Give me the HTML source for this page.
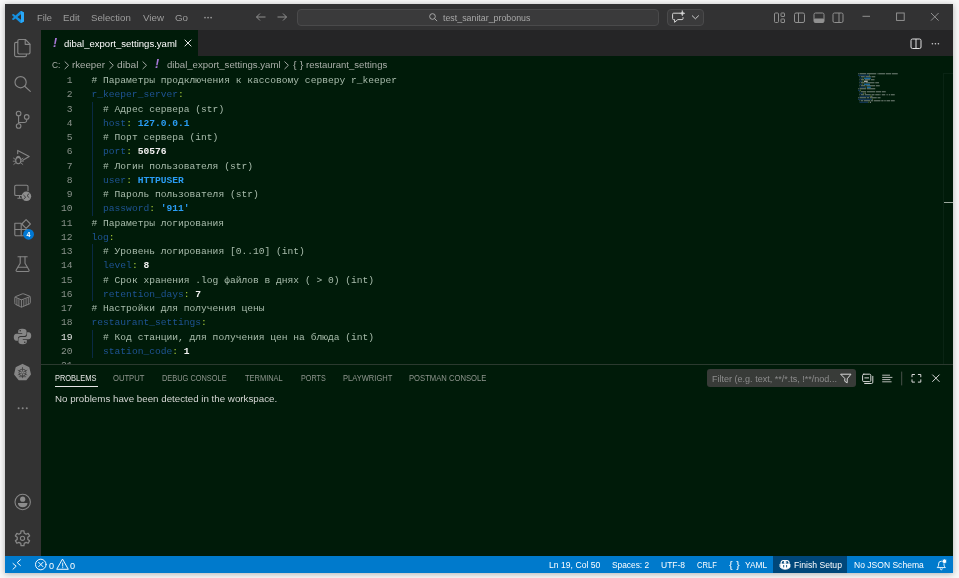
<!DOCTYPE html>
<html lang="en">
<head>
<meta charset="utf-8">
<title>dibal_export_settings.yaml - test_sanitar_probonus - Visual Studio Code</title>
<style>
*{box-sizing:border-box;margin:0;padding:0}
html,body{width:959px;height:578px;overflow:hidden}
body{background:#f8f8f8;font-family:"Liberation Sans",sans-serif;position:relative}
#win{will-change:transform;position:absolute;left:5px;top:4px;width:948px;height:568.5px;background:#001b09;box-shadow:0 1px 6px 0 rgba(0,0,0,.30);overflow:hidden}
.abs{position:absolute}
.t{position:absolute;white-space:pre;line-height:1}
/* title bar */
#title{position:absolute;left:0;top:0;width:948px;height:26px;background:#323233}
#title .m{color:#c8c8c8;font-size:9.75px;top:8px}
#searchbox{position:absolute;left:292px;top:4.5px;width:362px;height:17.5px;background:#3a3a3b;border:1px solid #4a4a4b;border-radius:4px}
#copilot{position:absolute;left:662px;top:4.5px;width:36.5px;height:17.5px;background:#3a3a3b;border:1px solid #4a4a4b;border-radius:4px}
/* activity bar */
#act{position:absolute;left:0;top:26px;width:36px;height:526px;background:#333333}
#act svg{position:absolute;left:0;overflow:visible}
/* tabs */
#tabs{position:absolute;left:36px;top:26px;width:912px;height:26px;background:#252526}
#tab1{position:absolute;left:0;top:0;width:157px;height:26px;background:#001b09}
/* breadcrumbs */
#bc{position:absolute;left:36px;top:52px;width:912px;height:17px;background:#001b09}
#bc .t{font-size:9.75px;color:#b4b8b4;top:4px}
/* editor */
#ed{position:absolute;left:36px;top:69px;width:912px;height:291px;background:#001b09;overflow:hidden;font-family:"Liberation Mono",monospace;font-size:9.625px}
.ln,.cl{margin-top:1px}
.ln{position:absolute;left:0;width:31.5px;text-align:right;color:#8a938c;height:14.25px;line-height:14.25px;white-space:pre}
.cl{position:absolute;left:50.5px;height:14.25px;line-height:14.25px;white-space:pre;color:#c3c9c3}
.k{color:#1e5494}
.p{color:#a5c83a}
.c{color:#a9bdad}
.v{color:#2a9df4;font-weight:bold}
.n{color:#f2f2f2;font-weight:bold}
.cur{color:#e8e8e8}
.guide{position:absolute;width:1px;background:#0a2a44}
/* panel */
#panel{position:absolute;left:36px;top:360px;width:912px;height:192px;background:#001b09;border-top:1px solid #2b3a2f}
#panel .pt{font-size:8.3px;color:#9aa09a;top:10.5px}
/* status */
#status{position:absolute;left:0;top:552px;width:948px;height:16.5px;background:#007acc;color:#fff}
#status .t{font-size:9.1px;top:4px;color:#fff}
</style>
</head>
<body>
<div id="win">

<!-- TITLE BAR -->
<div id="title">
  <svg class="abs" style="left:7.200px;top:7px" width="12" height="12" viewBox="0 0 24 24"><path d="M23.15 2.587L18.21.21a1.494 1.494 0 0 0-1.705.29l-9.46 8.63-4.12-3.128a.999.999 0 0 0-1.276.057L.327 7.261A1 1 0 0 0 .326 8.74L3.899 12 .326 15.26a1 1 0 0 0 .001 1.479L1.65 17.94a.999.999 0 0 0 1.276.057l4.12-3.128 9.46 8.630a1.492 1.492 0 0 0 1.704.29l4.942-2.377A1.500 1.500 0 0 0 24 20.060V3.939a1.500 1.500 0 0 0-.85-1.352zm-5.146 14.861L10.826 12l7.178-5.448v10.896z" fill="#1690e0"/><path d="M18.004 .1L23.150 2.587A1.500 1.500 0 0 1 24 3.939V20.060a1.500 1.500 0 0 1-.85 1.352L18.004 23.900Z" fill="#2aa8f8"/></svg>
  <span class="t" style="left:31.84px;top:8.87px;font-size:9.6px;color:#9d9d9d;transform:scaleX(0.9649);transform-origin:0 0;">File</span>
  <span class="t" style="left:58.31px;top:8.87px;font-size:9.6px;color:#9d9d9d;transform:scaleX(1.0137);transform-origin:0 0;">Edit</span>
  <span class="t" style="left:86.42px;top:8.87px;font-size:9.6px;color:#9d9d9d;transform:scaleX(1.0076);transform-origin:0 0;">Selection</span>
  <span class="t" style="left:137.51px;top:8.87px;font-size:9.6px;color:#9d9d9d;transform:scaleX(1.0170);transform-origin:0 0;">View</span>
  <span class="t" style="left:169.91px;top:8.87px;font-size:9.6px;color:#9d9d9d;transform:scaleX(1.0209);transform-origin:0 0;">Go</span>
  <svg class="abs" style="left:198px;top:11px" width="12" height="5" viewBox="203 15 12 5" fill="#9d9d9d"><circle cx="205" cy="17.600" r="0.850"/><circle cx="208.050" cy="17.600" r="0.850"/><circle cx="211.100" cy="17.600" r="0.850"/></svg>
  <svg class="abs" style="left:250px;top:8px" width="38" height="10" viewBox="0 0 38 10" fill="none" stroke="#959595" stroke-width="0.95"><path d="M1.5 5H10.5M5 1.5L1.5 5L5 8.5"/><path d="M22.5 5H31.5M28 1.5L31.5 5L28 8.5"/></svg>
  <div id="searchbox"></div>
  <svg class="abs" style="left:424.300px;top:9px" width="8.500" height="8.500" viewBox="0 0 9 9" fill="none" stroke="#b8b8b8" stroke-width="0.9"><circle cx="3.7" cy="3.7" r="3"/><path d="M5.9 5.9L8.6 8.6"/></svg>
  <span class="t" style="left:438.06px;top:9.90px;font-size:9.1px;color:#a8a8a8;transform:scaleX(0.9709);transform-origin:0 0;">test_sanitar_probonus</span>
  <div id="copilot"></div>
  <svg class="abs" style="left:662px;top:4px" width="40" height="20" viewBox="667 8 40 20" fill="none" stroke="#d6d6d6" stroke-width="1" stroke-linejoin="round" stroke-linecap="round"><path d="M680 13.200H673.600a1 1 0 0 0-1 1V18.600a1 1 0 0 0 1 1H674.600V22.300L677.800 19.600H682a1 1 0 0 0 1-1V17.600"/><path d="M682.300 10.600L683 12.600L685 13.300L683 14L682.300 16L681.600 14L679.600 13.300L681.600 12.600Z" fill="#d6d6d6" stroke-width="0.400"/><path d="M692.300 15.800L695.400 18.800L698.500 15.800" stroke-width="0.950"/></svg>
  <!-- layout icons -->
  <svg class="abs" style="left:768px;top:7.5px" width="74" height="12" viewBox="0 0 74 12" fill="none" stroke="#909090" stroke-width="1">
    <rect x="1.5" y="1" width="4" height="9.5" rx="1"/><rect x="8" y="1" width="3.500" height="3.500" rx="0.500"/><rect x="8" y="7" width="3.500" height="3.500" rx="0.500"/>
    <rect x="21.5" y="1" width="10" height="9.5" rx="1.5"/><path d="M25.5 1V10.5"/>
    <rect x="41" y="1" width="10" height="9.5" rx="1.5"/><path d="M41.5 7h9v2.5a1 1 0 0 1-1 1h-7a1 1 0 0 1-1-1z" fill="#909090"/>
    <rect x="60" y="1" width="10" height="9.5" rx="1.5"/><path d="M66 1V10.5"/>
  </svg>
  <!-- window controls -->
  <svg class="abs" style="left:855px;top:6px" width="86" height="14" viewBox="0 0 86 14" fill="none" stroke="#9a9a9a" stroke-width="0.9">
    <path d="M2.5 6.3H10"/>
    <rect x="36.6" y="3" width="7.6" height="7.4"/>
    <path d="M71 3L78.6 10.6M78.6 3L71 10.6"/>
  </svg>
</div>

<!-- ACTIVITY BAR -->
<div id="act">
  <!-- explorer -->
  <svg style="top:0" width="36" height="36" viewBox="0 0 36 36" fill="none" stroke="#868686" stroke-width="1.15" stroke-linejoin="round" stroke-linecap="round">
    <path d="M14.2 9.5H20.4L25 14.1V22.6a1.4 1.4 0 0 1-1.4 1.4H14.2a1.4 1.4 0 0 1-1.4-1.4V10.9a1.4 1.4 0 0 1 1.4-1.4Z"/>
    <path d="M20.2 9.7V14.3H24.8"/>
    <path d="M12.6 12.4H11a1.4 1.4 0 0 0-1.4 1.4V25a1.6 1.6 0 0 0 1.6 1.6H20a1.4 1.4 0 0 0 1.4-1.4V24.2"/>
  </svg>
  <!-- search -->
  <svg style="top:36px" width="36" height="36" viewBox="0 0 36 36" fill="none" stroke="#868686" stroke-width="1.15" stroke-linecap="round">
    <circle cx="15.600" cy="16.200" r="5.600"/><path d="M19.700 20.300L25.300 25.400"/>
  </svg>
  <!-- scm -->
  <svg style="top:72px" width="36" height="36" viewBox="0 0 36 36" fill="none" stroke="#868686" stroke-width="1.1">
    <circle cx="13.6" cy="11.5" r="2.3"/><circle cx="21.7" cy="14.9" r="2.3"/><circle cx="13.6" cy="24" r="2.3"/>
    <path d="M13.6 13.8V21.7M21.7 17.2V18.2a2.3 2.3 0 0 1-2.3 2.3H13.6"/>
  </svg>
  <!-- debug -->
  <svg style="top:108px" width="36" height="36" viewBox="0 0 36 36" fill="none" stroke="#868686" stroke-width="1.1" stroke-linejoin="round" stroke-linecap="round">
    <path d="M12.7 15.6V12.4L24.2 18.6L17.8 22.3"/>
    <ellipse cx="13.3" cy="22.6" rx="2.6" ry="3.2"/>
    <path d="M11.6 19.6a1.8 1.8 0 0 1 3.4 0" />
    <path d="M10.6 21.6L8.6 20.2M10.5 23.2H8.2M10.8 24.8L8.8 26.4M16 21.6L18 20.2M16.1 23.2H18.4M15.8 24.8L17.8 26.4" stroke-width="0.9"/>
  </svg>
  <!-- remote explorer -->
  <svg style="top:144px" width="36" height="36" viewBox="0 0 36 36" fill="none" stroke="#868686" stroke-width="1.1" stroke-linejoin="round">
    <path d="M17 21.5H11a1.3 1.3 0 0 1-1.3-1.3V12.6a1.3 1.3 0 0 1 1.3-1.3H21.7a1.3 1.3 0 0 1 1.3 1.3V17"/>
    <path d="M12.4 24.2H16.6M14.5 21.5V24.2"/>
    <circle cx="21.400" cy="22.300" r="4.800" fill="#8e8e8e" stroke="none"/>
    <path d="M18.700 21.300L20.700 23.200L18.700 25.100M24 19.700L22 21.600L24 23.500" stroke="#333" stroke-width="0.9" stroke-linecap="round" stroke-linejoin="round"/>
  </svg>
  <!-- extensions -->
  <svg style="top:180px" width="36" height="36" viewBox="0 0 36 36" fill="none" stroke="#868686" stroke-width="1.1" stroke-linejoin="round">
    <path d="M9.8 13.2H16.2V25.8H11a1.2 1.2 0 0 1-1.2-1.2Z"/>
    <path d="M9.8 19.5H22.6V24.6a1.2 1.2 0 0 1-1.2 1.2H16.2"/>
    <path d="M21.1 9.7L25.4 14L21.1 18.3L16.8 14Z"/>
    <circle cx="23.6" cy="24.3" r="5.4" fill="#0078d4" stroke="none"/>
  </svg>
  <span class="t" style="left:21.6px;top:21.2px;font-size:7px;font-weight:bold;color:#fff;transform:translateY(180px)">4</span>
  <!-- testing flask -->
  <svg style="top:216px" width="36" height="36" viewBox="0 0 36 36" fill="none" stroke="#868686" stroke-width="1.1" stroke-linejoin="round" stroke-linecap="round">
    <path d="M13 10.7H22.2"/>
    <path d="M15.2 10.9V17.2L11.2 24a1 1 0 0 0 .9 1.5H23.1a1 1 0 0 0 .9-1.5L20 17.2V10.9"/>
    <path d="M13 21.3H22.2"/>
  </svg>
  <!-- containers -->
  <svg style="top:252px" width="36" height="36" viewBox="0 0 36 36" fill="none" stroke="#868686" stroke-width="0.950" stroke-linejoin="round" stroke-linecap="round">
    <path d="M9.800 15.700Q9.800 14.900 10.600 14.600L17.200 11.900Q18 11.600 18.800 11.900L24.500 14.100Q25.300 14.500 25.300 15.300V20.700Q25.300 21.500 24.500 21.800L17.200 24.900Q16.400 25.200 15.600 24.800L10.600 22.400Q9.800 22 9.800 21.200Z"/>
    <path d="M10.200 15.100L16.400 17.900L24.900 14.700M16.400 17.900V25"/>
    <path d="M11.900 16.700V22.600M13.900 17.600V23.600M18.800 17.900V23.700M21.100 17V22.800M23.300 16.100V21.900" stroke-width="0.850"/>
  </svg>
  <!-- python -->
  <svg style="top:288px" width="36" height="36" viewBox="0 0 36 36" fill="#868686" stroke="none"><g transform="translate(17.500 18.500) scale(.88) translate(-18 -18.500)">
    <path d="M17.3 9.6c-3.2 0-4.2 1.2-4.2 2.8v2.1h4.6v.9H10.9c-1.7 0-2.8 1.500-2.800 4 0 2.600 1.100 4 2.800 4h1.900v-2.500c0-1.700 1.300-3 3-3h4.400c1.300 0 2.400-1.100 2.400-2.400v-3.100c0-1.600-1.400-2.800-4.300-2.800h-1zm-1.900 1.500a.9.900 0 1 1 0 1.800.9.900 0 0 1 0-1.800z"/>
    <path d="M18.700 27.400c3.200 0 4.200-1.200 4.200-2.800v-2.100h-4.600v-.9h6.800c1.700 0 2.800-1.500 2.800-4 0-2.600-1.100-4-2.800-4h-1.900v2.500c0 1.700-1.300 3-3 3h-4.400c-1.300 0-2.400 1.100-2.400 2.400v3.100c0 1.600 1.400 2.800 4.300 2.800h1zm1.900-1.500a.9.900 0 1 1 0-1.800.9.900 0 0 1 0 1.800z"/>
  </svg>
  <!-- kubernetes -->
  <svg style="top:324px" width="36" height="36" viewBox="0 0 36 36" fill="none" stroke="none"><g transform="translate(17.500 18.300) scale(.9) translate(-17.500 -17.700)">
    <path d="M17.500 9.100L24.300 12.400L26.100 19.800L21.400 25.800H13.700L9 19.800L10.700 12.400Z" fill="#868686" stroke="#868686" stroke-width="1.6" stroke-linejoin="round"/>
    <g stroke="#333" stroke-width="0.8" fill="none"><circle cx="17.500" cy="18" r="3.900"/><path d="M17.500 11.800V24.200M12.200 15.200L22.800 20.800M22.800 15.200L12.200 20.800M13.400 22.600L21.600 22.600" stroke-width="0.7"/></g>
    <circle cx="17.500" cy="18" r="1.100" fill="#868686"/>
  </g></svg>
  <!-- more -->
  <svg style="top:360px" width="36" height="36" viewBox="0 0 36 36" fill="#868686"><circle cx="13.600" cy="18.200" r="1"/><circle cx="17.700" cy="18.200" r="1"/><circle cx="21.800" cy="18.200" r="1"/></svg>
  <!-- account -->
  <svg style="top:454px" width="36" height="36" viewBox="0 0 36 36" fill="none" stroke="#868686" stroke-width="1.100">
    <circle cx="17.700" cy="18" r="7.700"/>
    <circle cx="17.700" cy="15.200" r="2.600" fill="#8c8c8c" stroke="none"/>
    <path d="M13 19H22.400V19.600a4.700 3.600 0 0 1-9.400 0Z" fill="#8c8c8c" stroke="none"/>
  </svg>
  <!-- gear -->
  <svg style="top:490px" width="36" height="36" viewBox="0 0 36 36" fill="none" stroke="#868686" stroke-width="1.100" stroke-linejoin="round">
    <circle cx="17.5" cy="18.3" r="2.100"/>
    <path d="M15.78 13.18L16.02 10.95L18.98 10.95L19.22 13.18L21.07 14.25L23.13 13.34L24.61 15.91L22.79 17.23L22.79 19.37L24.61 20.69L23.13 23.26L21.07 22.35L19.22 23.42L18.98 25.65L16.02 25.65L15.78 23.42L13.93 22.35L11.87 23.26L10.39 20.69L12.21 19.37L12.21 17.23L10.39 15.91L11.87 13.34L13.93 14.25Z" stroke-width="1.300"/>
  </svg>
</div>

<!-- TABS -->
<div id="tabs">
  <div id="tab1"></div>
  <span class="t" style="left:11.98px;top:6.72px;font-size:12.5px;color:#a878d8;transform:scaleX(1.0000);transform-origin:0 0;font-style:italic;font-weight:bold">!</span>
  <span class="t" style="left:23.02px;top:9.17px;font-size:9.6px;color:#ffffff;transform:scaleX(0.9944);transform-origin:0 0;">dibal_export_settings.yaml</span>
  <svg class="abs" style="left:143px;top:9px" width="8" height="8" viewBox="0 0 8 8" stroke="#e6e6e6" stroke-width="1" fill="none"><path d="M0.7 0.7L7.3 7.3M7.3 0.7L0.7 7.3"/></svg>
  <svg class="abs" style="left:869px;top:7.5px" width="36" height="12" viewBox="0 0 36 12" fill="none" stroke="#e0e0e0" stroke-width="1"><rect x="1" y="1" width="10" height="9.5" rx="1.5"/><path d="M6 1V10.5"/><g fill="#d0d0d0" stroke="none"><circle cx="22.4" cy="5.8" r="0.8"/><circle cx="25.4" cy="5.8" r="0.8"/><circle cx="28.4" cy="5.8" r="0.8"/></g></svg>
</div>

<!-- BREADCRUMBS -->
<div id="bc">
  <span class="t" style="left:11.48px;top:4.37px;font-size:9.6px;color:#a9aea9;transform:scaleX(0.8687);transform-origin:0 0;">C:</span>
  <span class="t" style="left:31.32px;top:4.37px;font-size:9.6px;color:#a9aea9;transform:scaleX(1.0104);transform-origin:0 0;">rkeeper</span>
  <span class="t" style="left:76.29px;top:4.37px;font-size:9.6px;color:#a9aea9;transform:scaleX(1.0610);transform-origin:0 0;">dibal</span>
  <span class="t" style="left:113.88px;top:2.02px;font-size:12.5px;color:#a878d8;transform:scaleX(1.0000);transform-origin:0 0;font-style:italic;font-weight:bold">!</span>
  <span class="t" style="left:126.02px;top:4.37px;font-size:9.6px;color:#a9aea9;transform:scaleX(0.9997);transform-origin:0 0;">dibal_export_settings.yaml</span>
  <span class="t" style="left:252.36px;top:4.37px;font-size:9.6px;color:#a9aea9;transform:scaleX(1.1333);transform-origin:0 0;">{ }</span>
  <span class="t" style="left:265.42px;top:4.37px;font-size:9.6px;color:#a9aea9;transform:scaleX(0.9959);transform-origin:0 0;">restaurant_settings</span>
  <svg class="abs" style="left:0;top:0" width="300" height="17" viewBox="41 56 300 17" fill="none" stroke="#a9aea9" stroke-width="0.95" stroke-linecap="round" stroke-linejoin="round"><path d="M65 61.800L68.600 65.300L65 68.800M109.700 61.800L113.300 65.300L109.700 68.800M142.900 61.800L146.500 65.300L142.900 68.800M284.800 61.800L288.400 65.300L284.800 68.800"/></svg>
</div>

<!-- EDITOR -->
<div id="ed">
  <div class="ln" style="top:0.0px">1</div>
  <div class="cl" style="top:0.0px"><span class="c"># Параметры продключения к кассовому серверу r_keeper</span></div>
  <div class="ln" style="top:14.25px">2</div>
  <div class="cl" style="top:14.25px"><span class="k">r_keeper_server</span><span class="p">:</span></div>
  <div class="ln" style="top:28.5px">3</div>
  <div class="cl" style="top:28.5px">  <span class="c"># Адрес сервера (str)</span></div>
  <div class="ln" style="top:42.75px">4</div>
  <div class="cl" style="top:42.75px">  <span class="k">host</span><span class="p">:</span> <span class="v">127.0.0.1</span></div>
  <div class="ln" style="top:57.0px">5</div>
  <div class="cl" style="top:57.0px">  <span class="c"># Порт сервера (int)</span></div>
  <div class="ln" style="top:71.25px">6</div>
  <div class="cl" style="top:71.25px">  <span class="k">port</span><span class="p">:</span> <span class="n">50576</span></div>
  <div class="ln" style="top:85.5px">7</div>
  <div class="cl" style="top:85.5px">  <span class="c"># Логин пользователя (str)</span></div>
  <div class="ln" style="top:99.75px">8</div>
  <div class="cl" style="top:99.75px">  <span class="k">user</span><span class="p">:</span> <span class="v">HTTPUSER</span></div>
  <div class="ln" style="top:114.0px">9</div>
  <div class="cl" style="top:114.0px">  <span class="c"># Пароль пользователя (str)</span></div>
  <div class="ln" style="top:128.25px">10</div>
  <div class="cl" style="top:128.25px">  <span class="k">password</span><span class="p">:</span> <span class="v">'911'</span></div>
  <div class="ln" style="top:142.5px">11</div>
  <div class="cl" style="top:142.5px"><span class="c"># Параметры логирования</span></div>
  <div class="ln" style="top:156.75px">12</div>
  <div class="cl" style="top:156.75px"><span class="k">log</span><span class="p">:</span></div>
  <div class="ln" style="top:171.0px">13</div>
  <div class="cl" style="top:171.0px">  <span class="c"># Уровень логирования [0..10] (int)</span></div>
  <div class="ln" style="top:185.25px">14</div>
  <div class="cl" style="top:185.25px">  <span class="k">level</span><span class="p">:</span> <span class="n">8</span></div>
  <div class="ln" style="top:199.5px">15</div>
  <div class="cl" style="top:199.5px">  <span class="c"># Срок хранения .log файлов в днях ( &gt; 0) (int)</span></div>
  <div class="ln" style="top:213.75px">16</div>
  <div class="cl" style="top:213.75px">  <span class="k">retention_days</span><span class="p">:</span> <span class="n">7</span></div>
  <div class="ln" style="top:228.0px">17</div>
  <div class="cl" style="top:228.0px"><span class="c"># Настройки для получения цены</span></div>
  <div class="ln" style="top:242.25px">18</div>
  <div class="cl" style="top:242.25px"><span class="k">restaurant_settings</span><span class="p">:</span></div>
  <div class="ln cur" style="top:256.5px">19</div>
  <div class="cl" style="top:256.5px">  <span class="c"># Код станции, для получения цен на блюда (int)</span></div>
  <div class="ln" style="top:270.75px">20</div>
  <div class="cl" style="top:270.75px">  <span class="k">station_code</span><span class="p">:</span> <span class="n">1</span></div>
  <div class="ln" style="top:285.0px">21</div>
  <div class="cl" style="top:285.0px"></div>
  <div class="guide" style="left:51px;top:28.5px;height:114.0px"></div>
  <div class="guide" style="left:51px;top:171.0px;height:57.0px"></div>
  <div class="guide" style="left:51px;top:256.5px;height:28.5px"></div>
  <svg class="abs" style="left:817px;top:0" width="85" height="40" viewBox="0 0 85 40" shape-rendering="auto">
    <rect x="0.00" y="0.20" width="0.75" height="1.1" fill="#6c7a70"/>
    <rect x="1.50" y="0.20" width="6.75" height="1.1" fill="#6c7a70"/>
    <rect x="9.00" y="0.20" width="9.00" height="1.1" fill="#6c7a70"/>
    <rect x="18.75" y="0.20" width="0.75" height="1.1" fill="#6c7a70"/>
    <rect x="20.25" y="0.20" width="6.75" height="1.1" fill="#6c7a70"/>
    <rect x="27.75" y="0.20" width="5.25" height="1.1" fill="#6c7a70"/>
    <rect x="33.75" y="0.20" width="6.00" height="1.1" fill="#6c7a70"/>
    <rect x="0.00" y="1.70" width="11.25" height="1.1" fill="#153a63"/>
    <rect x="11.25" y="1.70" width="0.75" height="1.1" fill="#6f8a2c"/>
    <rect x="1.50" y="3.20" width="0.75" height="1.1" fill="#6c7a70"/>
    <rect x="3.00" y="3.20" width="3.75" height="1.1" fill="#6c7a70"/>
    <rect x="7.50" y="3.20" width="5.25" height="1.1" fill="#6c7a70"/>
    <rect x="13.50" y="3.20" width="3.75" height="1.1" fill="#6c7a70"/>
    <rect x="1.50" y="4.70" width="3.00" height="1.1" fill="#153a63"/>
    <rect x="4.50" y="4.70" width="0.75" height="1.1" fill="#6f8a2c"/>
    <rect x="6.00" y="4.70" width="6.75" height="1.1" fill="#1f78bd"/>
    <rect x="1.50" y="6.20" width="0.75" height="1.1" fill="#6c7a70"/>
    <rect x="3.00" y="6.20" width="3.00" height="1.1" fill="#6c7a70"/>
    <rect x="6.75" y="6.20" width="5.25" height="1.1" fill="#6c7a70"/>
    <rect x="12.75" y="6.20" width="3.75" height="1.1" fill="#6c7a70"/>
    <rect x="1.50" y="7.70" width="3.00" height="1.1" fill="#153a63"/>
    <rect x="4.50" y="7.70" width="0.75" height="1.1" fill="#6f8a2c"/>
    <rect x="6.00" y="7.70" width="3.75" height="1.1" fill="#c8c8c8"/>
    <rect x="1.50" y="9.20" width="0.75" height="1.1" fill="#6c7a70"/>
    <rect x="3.00" y="9.20" width="3.75" height="1.1" fill="#6c7a70"/>
    <rect x="7.50" y="9.20" width="9.00" height="1.1" fill="#6c7a70"/>
    <rect x="17.25" y="9.20" width="3.75" height="1.1" fill="#6c7a70"/>
    <rect x="1.50" y="10.70" width="3.00" height="1.1" fill="#153a63"/>
    <rect x="4.50" y="10.70" width="0.75" height="1.1" fill="#6f8a2c"/>
    <rect x="6.00" y="10.70" width="6.00" height="1.1" fill="#1f78bd"/>
    <rect x="1.50" y="12.20" width="0.75" height="1.1" fill="#6c7a70"/>
    <rect x="3.00" y="12.20" width="4.50" height="1.1" fill="#6c7a70"/>
    <rect x="8.25" y="12.20" width="9.00" height="1.1" fill="#6c7a70"/>
    <rect x="18.00" y="12.20" width="3.75" height="1.1" fill="#6c7a70"/>
    <rect x="1.50" y="13.70" width="6.00" height="1.1" fill="#153a63"/>
    <rect x="7.50" y="13.70" width="0.75" height="1.1" fill="#6f8a2c"/>
    <rect x="9.00" y="13.70" width="3.75" height="1.1" fill="#1f78bd"/>
    <rect x="0.00" y="15.20" width="0.75" height="1.1" fill="#6c7a70"/>
    <rect x="1.50" y="15.20" width="6.75" height="1.1" fill="#6c7a70"/>
    <rect x="9.00" y="15.20" width="8.25" height="1.1" fill="#6c7a70"/>
    <rect x="0.00" y="16.70" width="2.25" height="1.1" fill="#153a63"/>
    <rect x="2.25" y="16.70" width="0.75" height="1.1" fill="#6f8a2c"/>
    <rect x="1.50" y="18.20" width="0.75" height="1.1" fill="#6c7a70"/>
    <rect x="3.00" y="18.20" width="5.25" height="1.1" fill="#6c7a70"/>
    <rect x="9.00" y="18.20" width="8.25" height="1.1" fill="#6c7a70"/>
    <rect x="18.00" y="18.20" width="5.25" height="1.1" fill="#6c7a70"/>
    <rect x="24.00" y="18.20" width="3.75" height="1.1" fill="#6c7a70"/>
    <rect x="1.50" y="19.70" width="3.75" height="1.1" fill="#153a63"/>
    <rect x="5.25" y="19.70" width="0.75" height="1.1" fill="#6f8a2c"/>
    <rect x="6.75" y="19.70" width="0.75" height="1.1" fill="#c8c8c8"/>
    <rect x="1.50" y="21.20" width="0.75" height="1.1" fill="#6c7a70"/>
    <rect x="3.00" y="21.20" width="3.00" height="1.1" fill="#6c7a70"/>
    <rect x="6.75" y="21.20" width="6.00" height="1.1" fill="#6c7a70"/>
    <rect x="13.50" y="21.20" width="3.00" height="1.1" fill="#6c7a70"/>
    <rect x="17.25" y="21.20" width="4.50" height="1.1" fill="#6c7a70"/>
    <rect x="22.50" y="21.20" width="0.75" height="1.1" fill="#6c7a70"/>
    <rect x="24.00" y="21.20" width="3.00" height="1.1" fill="#6c7a70"/>
    <rect x="27.75" y="21.20" width="0.75" height="1.1" fill="#6c7a70"/>
    <rect x="29.25" y="21.20" width="0.75" height="1.1" fill="#6c7a70"/>
    <rect x="30.75" y="21.20" width="1.50" height="1.1" fill="#6c7a70"/>
    <rect x="33.00" y="21.20" width="3.75" height="1.1" fill="#6c7a70"/>
    <rect x="1.50" y="22.70" width="10.50" height="1.1" fill="#153a63"/>
    <rect x="12.00" y="22.70" width="0.75" height="1.1" fill="#6f8a2c"/>
    <rect x="13.50" y="22.70" width="0.75" height="1.1" fill="#c8c8c8"/>
    <rect x="0.00" y="24.20" width="0.75" height="1.1" fill="#6c7a70"/>
    <rect x="1.50" y="24.20" width="6.75" height="1.1" fill="#6c7a70"/>
    <rect x="9.00" y="24.20" width="2.25" height="1.1" fill="#6c7a70"/>
    <rect x="12.00" y="24.20" width="6.75" height="1.1" fill="#6c7a70"/>
    <rect x="19.50" y="24.20" width="3.00" height="1.1" fill="#6c7a70"/>
    <rect x="0.00" y="25.70" width="14.25" height="1.1" fill="#153a63"/>
    <rect x="14.25" y="25.70" width="0.75" height="1.1" fill="#6f8a2c"/>
    <rect x="1.50" y="27.20" width="0.75" height="1.1" fill="#6c7a70"/>
    <rect x="3.00" y="27.20" width="2.25" height="1.1" fill="#6c7a70"/>
    <rect x="6.00" y="27.20" width="6.00" height="1.1" fill="#6c7a70"/>
    <rect x="12.75" y="27.20" width="2.25" height="1.1" fill="#6c7a70"/>
    <rect x="15.75" y="27.20" width="6.75" height="1.1" fill="#6c7a70"/>
    <rect x="23.25" y="27.20" width="2.25" height="1.1" fill="#6c7a70"/>
    <rect x="26.25" y="27.20" width="1.50" height="1.1" fill="#6c7a70"/>
    <rect x="28.50" y="27.20" width="3.75" height="1.1" fill="#6c7a70"/>
    <rect x="33.00" y="27.20" width="3.75" height="1.1" fill="#6c7a70"/>
    <rect x="1.50" y="28.70" width="9.00" height="1.1" fill="#153a63"/>
    <rect x="10.50" y="28.70" width="0.75" height="1.1" fill="#6f8a2c"/>
    <rect x="12.00" y="28.70" width="0.75" height="1.1" fill="#c8c8c8"/>
  </svg>
  <div class="abs" style="left:901.500px;top:0;width:1px;height:292px;background:#0a2414"></div>
  <div class="abs" style="left:901.500px;top:0;width:11px;height:1px;background:#0a2414"></div>
  <div class="abs" style="left:902.500px;top:128.500px;width:9.500px;height:1.800px;background:#9aa79c"></div>
</div>

<!-- PANEL -->
<div id="panel">
  <div class="abs" style="left:665.800px;top:4px;width:149.500px;height:18px;background:#383b38;border-radius:3px"></div>
  <span class="t" style="left:14.13px;top:9.76px;font-size:8.2px;color:#e7e7e7;transform:scaleX(0.9087);transform-origin:0 0;">PROBLEMS</span>
  <span class="t" style="left:72.42px;top:9.76px;font-size:8.2px;color:#8f968f;transform:scaleX(0.9315);transform-origin:0 0;">OUTPUT</span>
  <span class="t" style="left:121.23px;top:9.76px;font-size:8.2px;color:#8f968f;transform:scaleX(0.9049);transform-origin:0 0;">DEBUG CONSOLE</span>
  <span class="t" style="left:203.63px;top:9.76px;font-size:8.2px;color:#8f968f;transform:scaleX(0.9116);transform-origin:0 0;">TERMINAL</span>
  <span class="t" style="left:259.94px;top:9.76px;font-size:8.2px;color:#8f968f;transform:scaleX(0.8810);transform-origin:0 0;">PORTS</span>
  <span class="t" style="left:301.92px;top:9.76px;font-size:8.2px;color:#8f968f;transform:scaleX(0.9220);transform-origin:0 0;">PLAYWRIGHT</span>
  <span class="t" style="left:368.02px;top:9.76px;font-size:8.2px;color:#8f968f;transform:scaleX(0.9342);transform-origin:0 0;">POSTMAN CONSOLE</span>
  <span class="t" style="left:14.01px;top:29.47px;font-size:9.6px;color:#d4d6d4;transform:scaleX(1.0161);transform-origin:0 0;">No problems have been detected in the workspace.</span>
  <span class="t" style="left:670.55px;top:9.17px;font-size:9.6px;color:#8c8c8c;transform:scaleX(0.9407);transform-origin:0 0;">Filter (e.g. text, **/*.ts, !**/nod...</span>
  <div class="abs" style="left:13.500px;top:21px;width:43.500px;height:1px;background:#e7e7e7"></div>
  <svg class="abs" style="left:795px;top:5.500px" width="110" height="16" viewBox="836 370.500 110 16" fill="none" stroke="#d8d8d8" stroke-width="1" stroke-linejoin="round" stroke-linecap="round">
    <path d="M841 373.700H851L847.200 378.300V382.300L844.800 380.800V378.300Z"/>
    <rect x="862.600" y="373.700" width="8.200" height="7.400" rx="1.200"/><path d="M864.600 383H871.500a1.300 1.300 0 0 0 1.300-1.300V375.800M864.800 377.400H868.600"/>
    <path d="M882.600 374.700H889.600M882.600 376.900H892M882.600 379.100H890M882.600 381.300H891.200" stroke-width="0.850"/>
    <path d="M901.700 371.500V384.500" stroke="#5a605a" stroke-width="0.800"/>
    <path d="M912 376.300V374H914.500M918.300 374H920.800V376.300M920.800 379.300V381.600H918.300M914.500 381.600H912V379.300"/>
    <path d="M932.600 374.400L939.200 381M939.200 374.400L932.600 381"/>
  </svg>
</div>

<!-- STATUS BAR -->
<div id="status">
  <div class="abs" style="left:768px;top:0;width:74.300px;height:16.500px;background:#00477a"></div>
  <span class="t" style="left:43.54px;top:4.87px;font-size:9.6px;color:#fff;transform:scaleX(0.9500);transform-origin:0 0;">0</span>
  <span class="t" style="left:65.34px;top:4.87px;font-size:9.6px;color:#fff;transform:scaleX(0.9500);transform-origin:0 0;">0</span>
  <span class="t" style="left:544.07px;top:5.38px;font-size:9px;color:#fff;transform:scaleX(0.9592);transform-origin:0 0;">Ln 19, Col 50</span>
  <span class="t" style="left:607.18px;top:5.38px;font-size:9px;color:#fff;transform:scaleX(0.9276);transform-origin:0 0;">Spaces: 2</span>
  <span class="t" style="left:655.98px;top:5.38px;font-size:9px;color:#fff;transform:scaleX(0.9431);transform-origin:0 0;">UTF-8</span>
  <span class="t" style="left:691.52px;top:5.38px;font-size:9px;color:#fff;transform:scaleX(0.8401);transform-origin:0 0;">CRLF</span>
  <span class="t" style="left:723.83px;top:5.38px;font-size:9px;color:#fff;transform:scaleX(1.2606);transform-origin:0 0;">{ }</span>
  <span class="t" style="left:739.78px;top:5.38px;font-size:9px;color:#fff;transform:scaleX(0.9284);transform-origin:0 0;">YAML</span>
  <span class="t" style="left:788.77px;top:5.38px;font-size:9px;color:#fff;transform:scaleX(0.9587);transform-origin:0 0;">Finish Setup</span>
  <span class="t" style="left:848.57px;top:5.38px;font-size:9px;color:#fff;transform:scaleX(0.9486);transform-origin:0 0;">No JSON Schema</span>
  <svg class="abs" style="left:0;top:0" width="80" height="16.500" viewBox="5 556 80 16.500" fill="none" stroke="#fff" stroke-width="0.950" stroke-linecap="round" stroke-linejoin="round">
    <path d="M13 563.500L16.200 566.200L13 569.200M20.400 559.800L17.200 562.600L20.400 565.500"/>
    <circle cx="40.800" cy="564.500" r="5.300"/><path d="M38.600 562.300L43 566.700M43 562.300L38.600 566.700"/>
    <path d="M62.700 559.400L68.300 569.300H57.100Z"/><path d="M62.700 563V566.200M62.700 567.600V567.800" stroke-width="0.900"/>
  </svg>
  <svg class="abs" style="left:770px;top:0" width="178" height="16.500" viewBox="775 556 178 16.500" fill="none" stroke="#fff" stroke-width="1" stroke-linecap="round" stroke-linejoin="round">
    <path d="M781.200 563.400a2.300 2.300 0 0 1 2.300-2.900h.8a1.600 1.600 0 0 1 .8 3 1.600 1.600 0 0 1 .8-3h.8a2.300 2.300 0 0 1 2.300 2.900" stroke-width="1.200"/>
    <path d="M780.300 564H790V567.300C788.600 568.600 787 569.300 785.150 569.300S781.700 568.600 780.300 567.300Z" fill="#fff" stroke-width="0.800"/>
    <path d="M783.700 565.400V567M786.600 565.400V567" stroke="#00477a" stroke-width="0.900"/>
    <path d="M937.500 567.300C938.500 566.300 938.600 565.500 938.600 563.900A2.700 2.700 0 0 1 941.300 561.200A2.700 2.700 0 0 1 944 563.900C944 565.500 944.100 566.300 945.100 567.300Z" stroke-width="0.900"/>
    <path d="M940.300 568.800a1 1 0 0 0 2 0" stroke-width="0.900"/>
    <circle cx="944.500" cy="561.300" r="2.300" fill="#fff" stroke="#007acc" stroke-width="0.600"/>
  </svg>
</div>

</div>
</body>
</html>
